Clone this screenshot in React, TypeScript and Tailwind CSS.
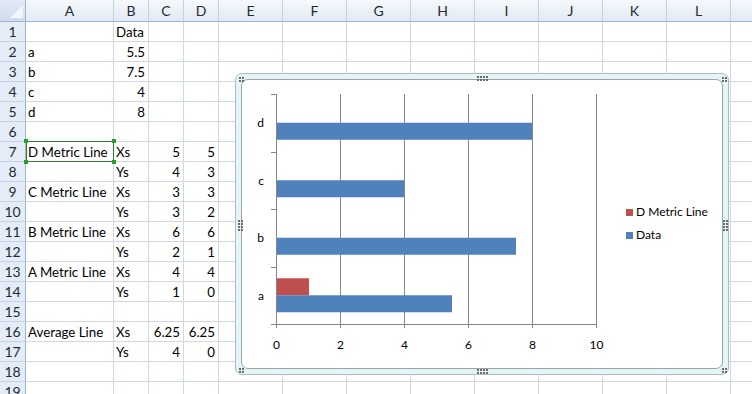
import React from "react";

type Col = { key: string; label: string; cls: string };

const cols: Col[] = [
  { key: "A", label: "A", cls: "w-[88px]" },
  { key: "B", label: "B", cls: "w-[35px]" },
  { key: "C", label: "C", cls: "w-[35px]" },
  { key: "D", label: "D", cls: "w-[35px]" },
  { key: "E", label: "E", cls: "w-[64px]" },
  { key: "F", label: "F", cls: "w-[64px]" },
  { key: "G", label: "G", cls: "w-[64px]" },
  { key: "H", label: "H", cls: "w-[64px]" },
  { key: "I", label: "I", cls: "w-[64px]" },
  { key: "J", label: "J", cls: "w-[64px]" },
  { key: "K", label: "K", cls: "w-[64px]" },
  { key: "L", label: "L", cls: "w-[64px]" },
  { key: "M", label: "", cls: "w-[64px]" },
];

type Cell = { t: string; r?: boolean };
const rows: Record<number, Record<string, Cell>> = {
  1: { B: { t: "Data" } },
  2: { A: { t: "a" }, B: { t: "5.5", r: true } },
  3: { A: { t: "b" }, B: { t: "7.5", r: true } },
  4: { A: { t: "c" }, B: { t: "4", r: true } },
  5: { A: { t: "d" }, B: { t: "8", r: true } },
  7: { A: { t: "D Metric Line" }, B: { t: "Xs" }, C: { t: "5", r: true }, D: { t: "5", r: true } },
  8: { B: { t: "Ys" }, C: { t: "4", r: true }, D: { t: "3", r: true } },
  9: { A: { t: "C Metric Line" }, B: { t: "Xs" }, C: { t: "3", r: true }, D: { t: "3", r: true } },
  10: { B: { t: "Ys" }, C: { t: "3", r: true }, D: { t: "2", r: true } },
  11: { A: { t: "B Metric Line" }, B: { t: "Xs" }, C: { t: "6", r: true }, D: { t: "6", r: true } },
  12: { B: { t: "Ys" }, C: { t: "2", r: true }, D: { t: "1", r: true } },
  13: { A: { t: "A Metric Line" }, B: { t: "Xs" }, C: { t: "4", r: true }, D: { t: "4", r: true } },
  14: { B: { t: "Ys" }, C: { t: "1", r: true }, D: { t: "0", r: true } },
  16: { A: { t: "Average Line" }, B: { t: "Xs" }, C: { t: "6.25", r: true }, D: { t: "6.25", r: true } },
  17: { B: { t: "Ys" }, C: { t: "4", r: true }, D: { t: "0", r: true } },
};

const rowNums = Array.from({ length: 19 }, (_, i) => i + 1);

function HandleDots() {
  // resize handles on the chart frame (frame is 494 x 302)
  const groups: { x: number; y: number; c: number; r: number }[] = [
    { x: 3, y: 3, c: 2, r: 2 },
    { x: 486, y: 3, c: 2, r: 2 },
    { x: 3, y: 294, c: 2, r: 2 },
    { x: 486, y: 294, c: 2, r: 2 },
    { x: 241, y: 2, c: 4, r: 2 },
    { x: 241, y: 295, c: 4, r: 2 },
    { x: 2, y: 146, c: 2, r: 4 },
    { x: 487, y: 146, c: 2, r: 4 },
  ];
  return (
    <svg width="494" height="302" className="absolute left-0 top-0 pointer-events-none">
      {groups.map((g, gi) =>
        Array.from({ length: g.r }).map((_, i) =>
          Array.from({ length: g.c }).map((__, j) => (
            <rect key={`${gi}-${i}-${j}`} x={g.x + j * 3} y={g.y + i * 3} width={2} height={2} fill="#6b6b6b" />
          ))
        )
      )}
    </svg>
  );
}

function Chart() {
  const x = (v: number) => 34 + 32 * v;
  const top = 14;
  const bottom = 244;
  const cat = 57.5;
  const cats = ["a", "b", "c", "d"];
  const data = [5.5, 7.5, 4, 8];
  const red = [1, 0, 0, 0];
  const font = "Lato, 'Liberation Sans', sans-serif";
  const fs = "12";
  return (
    <div className="absolute left-[235px] top-[73px] w-[494px] h-[302px] rounded-[7px] border border-[#aebcc1] bg-[#e3f5f7] p-[5px]">
      <div className="w-full h-full rounded-[7px] border border-[#9aa5a9] bg-white overflow-hidden">
        <svg width="481" height="288" className="block">
          {[2, 4, 6, 8, 10].map((v) => (
            <line key={v} x1={x(v) + 0.5} x2={x(v) + 0.5} y1={top} y2={bottom} stroke="#868686" strokeWidth="1" />
          ))}
          {cats.map((c, i) => {
            const center = bottom - (i + 0.5) * cat;
            return (
              <g key={c}>
                {red[i] > 0 && (
                  <rect x={x(0) + 1} y={center - 17} width={32 * red[i]} height={17} fill="#c0504d" />
                )}
                <rect x={x(0) + 1} y={center} width={32 * data[i] - 1} height={17} fill="#4f81bd" />
                <text x={22} y={center + 1.5} textAnchor="end" dominantBaseline="middle" fontSize={fs} fontFamily={font} fill="#000">
                  {c}
                </text>
              </g>
            );
          })}
          <line x1={x(0) + 0.5} x2={x(0) + 0.5} y1={top} y2={bottom} stroke="#868686" strokeWidth="1" />
          {[0, 1, 2, 3, 4].map((i) => (
            <line key={i} x1={29} x2={x(0)} y1={Math.round(top + i * cat) + 0.5} y2={Math.round(top + i * cat) + 0.5} stroke="#868686" strokeWidth="1" />
          ))}
          <line x1={29} x2={x(10) + 1} y1={bottom + 0.5} y2={bottom + 0.5} stroke="#868686" strokeWidth="1" />
          {[0, 2, 4, 6, 8, 10].map((v) => (
            <g key={v}>
              <line x1={x(v) + 0.5} x2={x(v) + 0.5} y1={bottom} y2={bottom + 4} stroke="#868686" strokeWidth="1" />
              <text x={x(v) + 0.5} y={266} textAnchor="middle" dominantBaseline="middle" fontSize={fs} fontFamily={font} fill="#000">
                {v}
              </text>
            </g>
          ))}
          <rect x={384} y={129} width={7} height={7} fill="#c0504d" />
          <text x={394} y={132.5} dominantBaseline="middle" fontSize={fs} fontFamily={font} fill="#000">
            D Metric Line
          </text>
          <rect x={384} y={152} width={7} height={7} fill="#4f81bd" />
          <text x={394} y={155.5} dominantBaseline="middle" fontSize={fs} fontFamily={font} fill="#000">
            Data
          </text>
        </svg>
      </div>
      <HandleDots />
    </div>
  );
}

export default function App() {
  const font = { fontFamily: "Lato, 'Liberation Sans', sans-serif" };
  return (
    <div className="relative w-[752px] h-[394px] overflow-hidden bg-white text-[13.3px] leading-[16px] text-black" style={font}>
      <div className="flex h-[22px] border-b border-[#9eb6ce] bg-gradient-to-b from-[#f6f9fc] to-[#e1e9f3]">
        <div className="w-[26px] shrink-0 border-r border-[#9eb6ce] bg-gradient-to-b from-[#e3ebf6] to-[#cfdcec] flex items-end justify-end pr-[2px] pb-[3px]">
          <div className="w-0 h-0 border-l-[13px] border-l-transparent border-b-[13px] border-b-[#f3f6fb]" />
        </div>
        {cols.map((c) => (
          <div key={c.key} className={`${c.cls} shrink-0 border-r border-[#c5d2e2] flex items-center justify-center text-[#1f2a36] text-[14px]`}>
            {c.label}
          </div>
        ))}
      </div>
      {rowNums.map((n) => (
        <div key={n} className="flex h-[20px]">
          <div className="w-[26px] shrink-0 border-r border-b border-r-[#9eb6ce] border-b-[#c5d2e2] bg-[#e4ecf7] flex items-end justify-center pb-[1px] text-[#1f2a36] text-[14px]">
            {n}
          </div>
          {cols.map((c) => {
            const cell = rows[n]?.[c.key];
            return (
              <div
                key={c.key}
                className={`${c.cls} shrink-0 border-r border-b border-[#d0d7e5] flex items-end pb-[1px] whitespace-nowrap ${cell?.r ? "justify-end pr-[3px]" : "justify-start pl-[2px]"}`}
              >
                {cell?.t ?? ""}
              </div>
            );
          })}
        </div>
      ))}
      <div className="absolute left-[26px] top-[141px] w-[88px] h-[21px] border border-[#2e7d32]">
        <div className="absolute -left-[3px] -top-[3px] w-[4px] h-[4px] bg-[#2a9d2a]" />
        <div className="absolute -right-[3px] -top-[3px] w-[4px] h-[4px] bg-[#2a9d2a]" />
        <div className="absolute -left-[3px] -bottom-[3px] w-[4px] h-[4px] bg-[#2a9d2a]" />
        <div className="absolute -right-[3px] -bottom-[3px] w-[4px] h-[4px] bg-[#2a9d2a]" />
      </div>
      <Chart />
    </div>
  );
}
